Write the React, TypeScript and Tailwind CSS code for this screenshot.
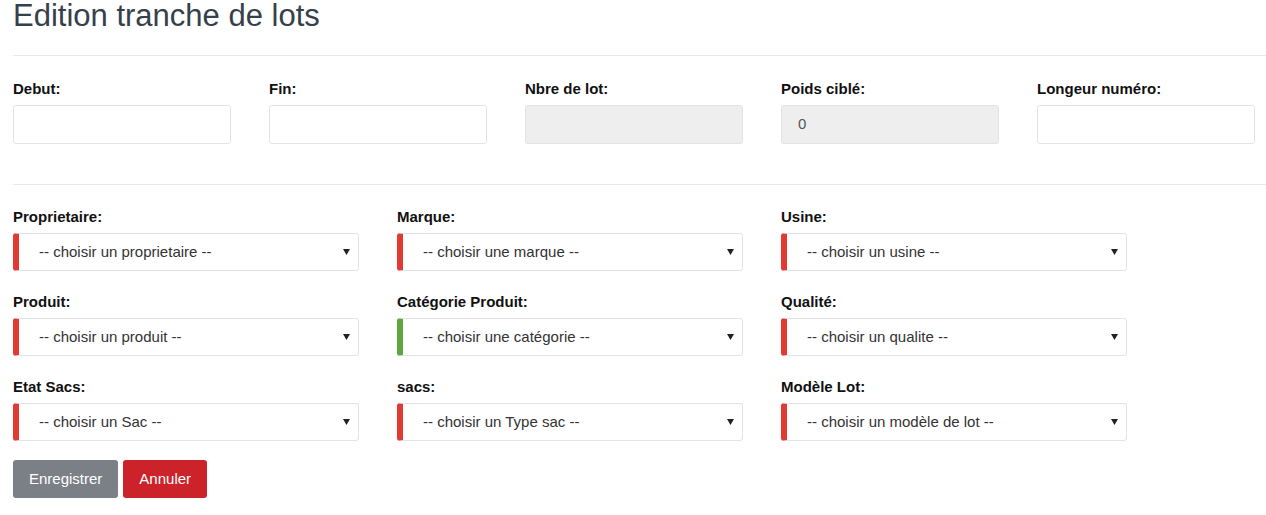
import React from "react";

const font = { fontFamily: '"Liberation Sans", Arial, sans-serif' };

function TextInput({ label, disabled, value }: { label: string; disabled?: boolean; value?: string }) {
  return (
    <div className="flex flex-col">
      <label className="text-[15px] leading-[20px] font-bold text-[#111] mb-[6px]">{label}</label>
      <div
        className={`h-[39px] w-[218px] rounded-[3px] border border-[#e3e3e3] flex items-center pl-[16px] text-[15px] text-[#555] ${
          disabled ? "bg-[#eeeeee]" : "bg-white"
        }`}
      >
        {value}
      </div>
    </div>
  );
}

function Select({ label, placeholder, green }: { label: string; placeholder: string; green?: boolean }) {
  return (
    <div className="flex flex-col">
      <label className="text-[15px] leading-[20px] font-bold text-[#111] mb-[6px]">{label}</label>
      <div
        className={`relative h-[38px] w-[346px] rounded-[3px] border border-[#e3e3e3] border-l-[6px] bg-white flex items-center pl-[20px] text-[15px] text-[#333] ${
          green ? "border-l-[#5aa83f]" : "border-l-[#e23a33]"
        }`}
      >
        <span>{placeholder}</span>
        <svg className="absolute right-[8px] top-[15px]" width="7" height="6" viewBox="0 0 7 6">
          <path d="M0 0 H7 L3.5 6 Z" fill="#222" />
        </svg>
      </div>
    </div>
  );
}

export default function App() {
  return (
    <div className="bg-white w-[1266px] h-[515px] pl-[13px] overflow-hidden" style={font}>
      <h1 className="text-[31px] leading-[36px] font-normal text-[#36404b] m-0 -mt-[2px]">Edition tranche de lots</h1>
      <hr className="mt-[21px] border-0 border-t border-[#eaeaea]" />
      <div className="mt-[23px] grid grid-cols-[repeat(5,218px)] gap-x-[38px]">
        <TextInput label="Debut:" />
        <TextInput label="Fin:" />
        <TextInput label="Nbre de lot:" disabled />
        <TextInput label="Poids ciblé:" disabled value="0" />
        <TextInput label="Longeur numéro:" />
      </div>
      <hr className="mt-[40px] border-0 border-t border-[#eaeaea]" />
      <div className="mt-[22px] grid grid-cols-[repeat(3,346px)] gap-x-[38px] gap-y-[21px]">
        <Select label="Proprietaire:" placeholder="-- choisir un proprietaire --" />
        <Select label="Marque:" placeholder="-- choisir une marque --" />
        <Select label="Usine:" placeholder="-- choisir un usine --" />
        <Select label="Produit:" placeholder="-- choisir un produit --" />
        <Select label="Catégorie Produit:" placeholder="-- choisir une catégorie --" green />
        <Select label="Qualité:" placeholder="-- choisir un qualite --" />
        <Select label="Etat Sacs:" placeholder="-- choisir un Sac --" />
        <Select label="sacs:" placeholder="-- choisir un Type sac --" />
        <Select label="Modèle Lot:" placeholder="-- choisir un modèle de lot --" />
      </div>
      <div className="mt-[19px] flex gap-[5px]">
        <button className="h-[38px] px-[16px] rounded-[3px] bg-[#7b7f86] text-white text-[15px]">Enregistrer</button>
        <button className="h-[38px] px-[16px] rounded-[3px] bg-[#cc2229] text-white text-[15px]">Annuler</button>
      </div>
    </div>
  );
}
